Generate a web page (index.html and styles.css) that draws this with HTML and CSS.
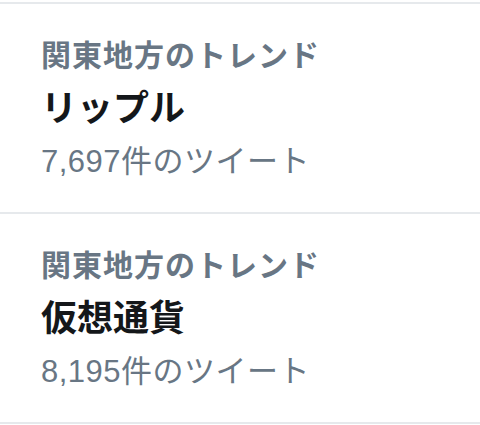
FILE: index.html
```html
<!DOCTYPE html>
<html lang="ja">
<head>
    <meta charset="UTF-8">
    <title>トレンド</title>
    <link rel="stylesheet" href="styles.css">
</head>
<body>

<ul class="trends">
    <li class="trend">
        <div class="place">関東地方のトレンド</div>
        <div class="name">リップル</div>
        <div class="count">7,697件のツイート</div>
    </li>
    <li class="trend">
        <div class="place">関東地方のトレンド</div>
        <div class="name">仮想通貨</div>
        <div class="count">8,195件のツイート</div>
    </li>
</ul>

</body>
</html>
```

FILE: styles.css
```css
*{
    margin: 0;
    padding: 0;
}
body{
    background-color: #fff;
    font-family: "Liberation Sans", "Noto Sans CJK JP", sans-serif;
}
.trends{
    list-style: none;
    padding-top: 2px;
}
.trend{
    border-top: 2px solid #e6e9ec;
    padding: 25px 0 24px 41px;
}
.trend:last-child{
    border-bottom: 2px solid #e6e9ec;
}
.place{
    font-size: 30px;
    line-height: 53px;
    letter-spacing: 1px;
    font-weight: bold;
    color: #687684;
}
.name{
    font-size: 36px;
    line-height: 53px;
    font-weight: bold;
    color: #14171a;
}
.count{
    font-size: 31px;
    line-height: 53px;
    letter-spacing: 0.5px;
    color: #687684;
}
```
